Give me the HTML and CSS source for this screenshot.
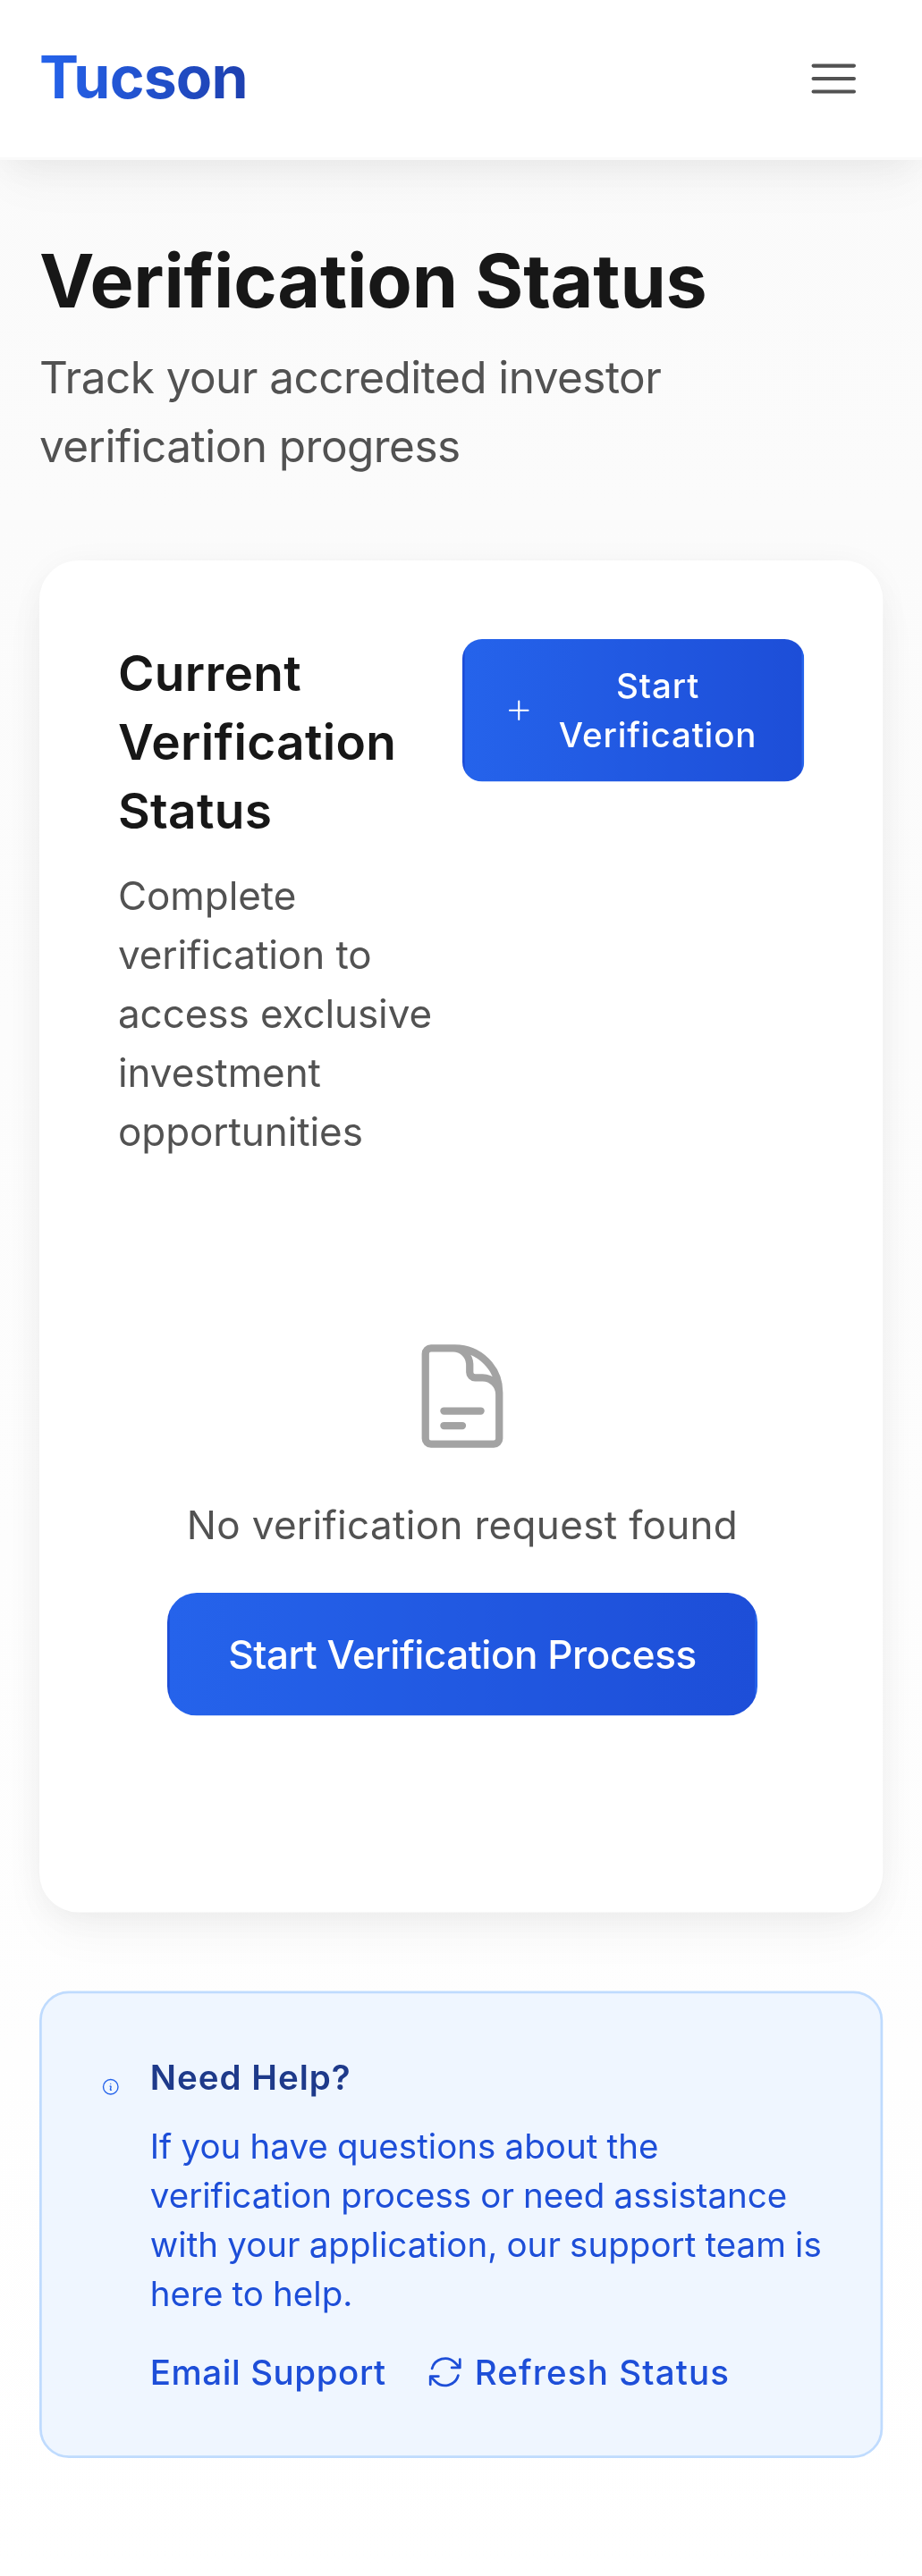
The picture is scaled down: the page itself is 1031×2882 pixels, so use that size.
FILE: index.html
```html
<!DOCTYPE html>
<html lang="en">
<head>
<meta charset="utf-8">
<title>Verification Status - Tucson</title>
<link rel="stylesheet" href="styles.css">
</head>
<body>
<div class="app">
  <header class="header">
    <a class="logo">Tucson</a>
    <button class="menu" aria-label="Open menu">
      <svg class="menu-icon" viewBox="0 0 24 24"><path d="M3.75 6.75h16.5M3.75 12h16.5m-16.5 5.25h16.5"/></svg>
    </button>
  </header>
  <main class="main">
    <h1 class="title">Verification Status</h1>
    <p class="subtitle">Track your accredited investor verification progress</p>

    <section class="card">
      <div class="card-head">
        <div class="card-intro">
          <h2 class="card-title">Current Verification Status</h2>
          <p class="card-text">Complete verification to access exclusive investment opportunities</p>
        </div>
        <button class="btn btn-small">
          <svg class="plus-icon" viewBox="0 0 24 24"><path d="M12 4.5v15m7.5-7.5h-15"/></svg>
          <span class="btn-label">Start Verification</span>
        </button>
      </div>
      <div class="empty">
        <svg class="doc-icon" viewBox="0 0 24 24"><path d="M19.5 14.25v-2.625a3.375 3.375 0 0 0-3.375-3.375h-1.5A1.125 1.125 0 0 1 13.5 7.125v-1.5a3.375 3.375 0 0 0-3.375-3.375H8.25m0 12.75h7.5m-7.5 3H12M10.5 2.25H5.625c-.621 0-1.125.504-1.125 1.125v17.25c0 .621.504 1.125 1.125 1.125h12.75c.621 0 1.125-.504 1.125-1.125V11.25a9 9 0 0 0-9-9z"/></svg>
        <p class="empty-text">No verification request found</p>
        <button class="btn btn-large">Start Verification Process</button>
      </div>
    </section>

    <section class="help">
      <svg class="info-icon" viewBox="0 0 24 24"><path d="M11.25 11.25l.041-.02a.75.75 0 0 1 1.063.852l-.708 2.836a.75.75 0 0 0 1.063.853l.041-.021M21 12a9 9 0 1 1-18 0 9 9 0 0 1 18 0zm-9-3.75h.008v.008H12V8.25z"/></svg>
      <div class="help-body">
        <h3 class="help-title">Need Help?</h3>
        <p class="help-text">If you have questions about the verification process or need assistance with your application, our support team is here to help.</p>
        <div class="help-links">
          <a class="link">Email Support</a>
          <a class="link link-refresh">
            <svg class="refresh-icon" viewBox="0 0 24 24"><path d="M16.023 9.348h4.992v-.001M2.985 19.644v-4.992m0 0h4.992m-4.993 0l3.181 3.183a8.25 8.25 0 0 0 13.803-3.7M4.031 9.865a8.25 8.25 0 0 1 13.803-3.7l3.181 3.182m0-4.991v4.99"/></svg>
            Refresh Status
          </a>
        </div>
      </div>
    </section>
  </main>
</div>
</body>
</html>
```
FILE: styles.css
```css
* {
  box-sizing: border-box;
  margin: 0;
  padding: 0;
}

html {
  overflow: hidden;
  background: #fff;
}

body {
  height: 2882px;
  overflow: hidden;
}

/* Mobile layout on a 375px grid, enlarged to the window */
.app {
  width: 375px;
  height: 1048px;
  transform: scale(2.75);
  transform-origin: 0 0;
  font-family: Inter, "Liberation Sans", sans-serif;
  font-size: 16px;
  line-height: 24px;
  color: #525252;
  background: linear-gradient(to bottom, #fafafa, #fff);
}

svg {
  display: block;
  flex: none;
  fill: none;
  stroke: currentColor;
  stroke-width: 1.5;
  stroke-linecap: round;
  stroke-linejoin: round;
}

button {
  font: inherit;
  color: inherit;
  background: none;
  border: 0;
}

.header {
  display: flex;
  align-items: center;
  justify-content: space-between;
  height: 65px;
  padding: 0 16px;
  background: rgba(255, 255, 255, 0.95);
  border-bottom: 1px solid rgba(245, 245, 245, 0.5);
  box-shadow: 0 2px 15px -3px rgba(0, 0, 0, 0.07), 0 10px 20px -2px rgba(0, 0, 0, 0.04);
}

.logo {
  font-size: 24px;
  font-weight: 700;
  line-height: 32px;
  letter-spacing: -0.3px;
  color: transparent;
  background: linear-gradient(to right, #2563eb, #1e40af);
  background-clip: text;
}

.menu {
  padding: 8px;
}

.menu-icon {
  width: 24px;
  height: 24px;
}

.main {
  padding: 31px 16px 48px;
}

.title {
  font-size: 30px;
  font-weight: 700;
  line-height: 36px;
  letter-spacing: -0.06px;
  color: #171717;
}

.subtitle {
  margin-top: 8px;
  font-size: 18px;
  line-height: 28px;
  letter-spacing: -0.2px;
}

.card {
  margin-top: 32px;
  padding: 32px;
  background: #fff;
  border-radius: 16px;
  box-shadow: 0 2px 15px -3px rgba(0, 0, 0, 0.07), 0 10px 20px -2px rgba(0, 0, 0, 0.04);
}

.card-head {
  display: flex;
  align-items: flex-start;
  justify-content: space-between;
}

.card-intro {
  flex: 1;
}

.card-title {
  font-size: 20px;
  font-weight: 600;
  line-height: 28px;
  letter-spacing: 0.12px;
  color: #171717;
}

.card-text {
  margin-top: 8px;
  letter-spacing: -0.03px;
}

.btn {
  color: #fff;
  font-weight: 500;
  background: linear-gradient(to right, #2563eb, #1d4ed8);
  border: 1px solid transparent;
}

.btn-small {
  display: flex;
  align-items: center;
  gap: 8px;
  width: 139px;
  padding: 8px 16px;
  font-size: 14px;
  line-height: 20px;
  letter-spacing: 0.32px;
  border-radius: 8px;
}

.btn-label {
  flex: 1;
}

.plus-icon {
  width: 12px;
  height: 16px;
}

.empty {
  display: flex;
  flex-direction: column;
  align-items: center;
  margin-top: 24px;
  padding: 48px 0 48px 1px;
}

.doc-icon {
  width: 48px;
  height: 48px;
  color: #a3a3a3;
}

.empty-text {
  margin: 16px 0;
  letter-spacing: 0.12px;
}

.btn-large {
  width: 240px;
  height: 50px;
  letter-spacing: -0.17px;
  border-radius: 12px;
}

.help {
  display: flex;
  gap: 12px;
  margin-top: 32px;
  padding: 24px;
  font-size: 14px;
  line-height: 20px;
  color: #1d4ed8;
  background: #eff6ff;
  border: 1px solid #bfdbfe;
  border-radius: 12px;
}

.info-icon {
  width: 8px;
  height: 20px;
  margin-top: 4px;
  color: #2563eb;
}

.help-title {
  font-size: 14px;
  font-weight: 600;
  letter-spacing: 0.36px;
  color: #1e3a8a;
}

.help-text {
  margin-top: 8px;
  margin-right: -4px;
  letter-spacing: 0.01px;
  word-spacing: -0.25px;
}

.help-links {
  display: flex;
  gap: 16px;
  margin-top: 12px;
}

.link {
  display: flex;
  align-items: center;
  gap: 4px;
  font-weight: 500;
  letter-spacing: 0.21px;
}

.link-refresh {
  letter-spacing: 0.41px;
}

.refresh-icon {
  width: 16px;
  height: 16px;
}
```
